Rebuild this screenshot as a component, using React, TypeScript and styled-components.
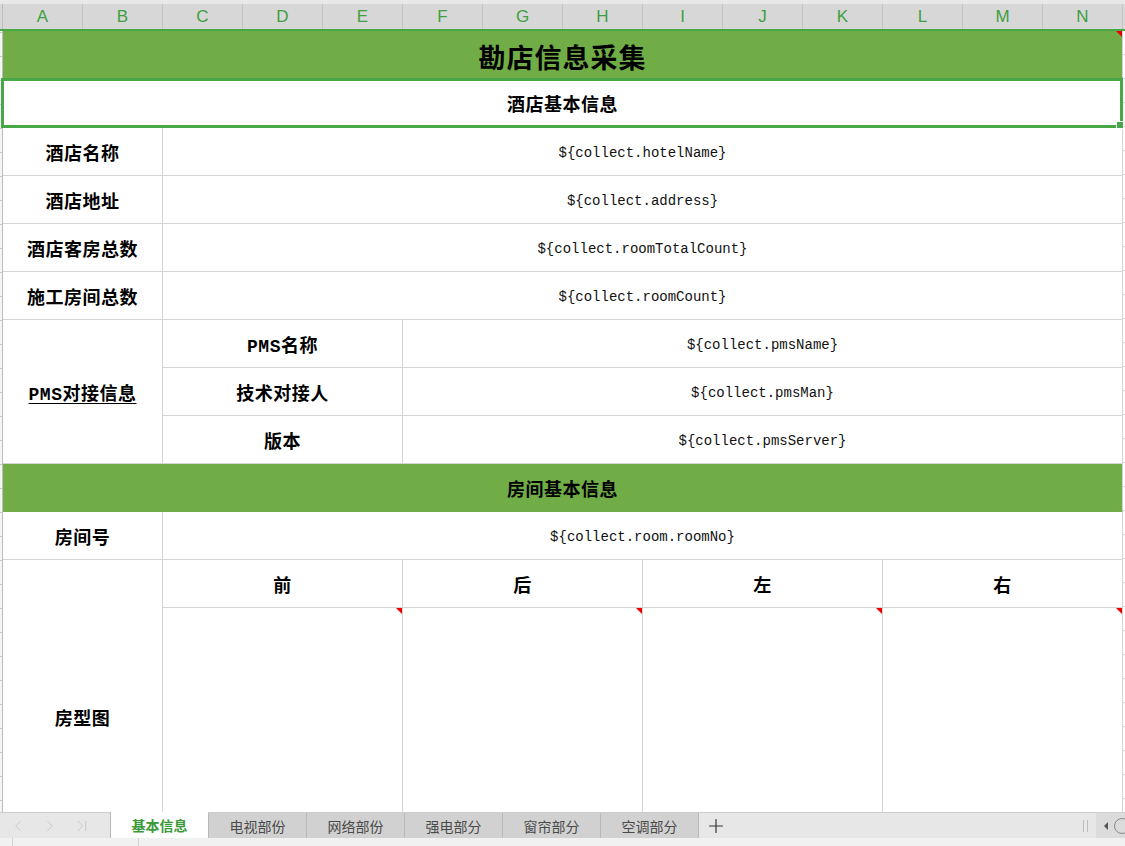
import React from 'react';
import styled, { createGlobalStyle } from 'styled-components';
import { ChevronLeft, ChevronRight, ChevronLast, Plus } from 'lucide-react';

const CELL_FONT = `"Liberation Mono", "Noto Sans CJK SC", monospace`;
const UI_FONT = `"Noto Sans CJK SC", "Noto Sans", sans-serif`;
const FILL = '#70ad47';
const GRID = '#d4d4d4';
const SEL = '#48a848';

const GlobalStyle = createGlobalStyle`
  html, body { margin: 0; padding: 0; overflow: hidden; background: #fff; }
  #root { width: 1125px; height: 846px; }
`;

const Window = styled.div`
  width: 1125px;
  height: 846px;
  display: flex;
  flex-direction: column;
  overflow: hidden;
  background: #fff;
`;

const TopStrip = styled.div`
  flex: none;
  height: 4px;
  background: #e8e8e8;
`;

const ColumnHeaderBar = styled.div`
  flex: none;
  display: flex;
  height: 25px;
  background: #d7d7d7;
  border-bottom: 2px solid ${SEL};
`;

const Corner = styled.div`
  flex: none;
  width: 2px;
  border-right: 1px solid #bdbdbd;
`;

const ColumnHeader = styled.div`
  flex: none;
  width: 80px;
  box-sizing: border-box;
  border-right: 1px solid #c4c4c4;
  display: flex;
  align-items: center;
  justify-content: center;
  padding-top: 1px;
  font-family: "Liberation Sans", Arial, sans-serif;
  font-size: 17px;
  color: #3f9f3f;
`;

const SheetViewport = styled.div`
  position: relative;
  flex: none;
  height: 781px;
  display: flex;
  overflow: hidden;
`;

const RowHeaderStrip = styled.div`
  flex: none;
  width: 2px;
  border-right: 1px solid #bdbdbd;
  background-color: #f4f4f4;
  background-image: repeating-linear-gradient(to bottom, #c6c6c6 0 1px, transparent 1px 24px);
  background-position: 0 1px;
`;

const Grid = styled.div`
  flex: none;
  display: grid;
  grid-template-columns: repeat(15, 80px);
  grid-template-rows: 47px 50px repeat(10, 48px) 266px;
`;

const Cell = styled.div<{ $col: string; $row: string; $fill?: string }>`
  grid-column: ${(p) => p.$col};
  grid-row: ${(p) => p.$row};
  position: relative;
  box-sizing: border-box;
  min-width: 0;
  display: flex;
  align-items: center;
  justify-content: center;
  background: ${(p) => p.$fill ?? '#fff'};
  border-right: 1px solid ${GRID};
  border-bottom: 1px solid ${(p) => p.$fill ?? GRID};
  color: #000;
`;

const NextColumn = styled.div`
  grid-column: 15;
  grid-row: 1 / -1;
  background-image: repeating-linear-gradient(to bottom, transparent 0 23px, ${GRID} 23px 24px);
`;

const Title = styled.span`
  font-family: ${CELL_FONT};
  font-size: 27px;
  font-weight: 700;
  letter-spacing: 1px;
  padding-top: 4px;
`;

const Label = styled.span<{ $underline?: boolean }>`
  font-family: ${CELL_FONT};
  font-size: 18px;
  font-weight: 700;
  letter-spacing: 0.5px;
  white-space: nowrap;
  text-decoration: ${(p) => (p.$underline ? 'underline' : 'none')};
  text-underline-offset: 3px;
  text-decoration-thickness: 1px;
`;

const Value = styled.span`
  font-family: "Liberation Mono", "DejaVu Sans Mono", monospace;
  font-size: 14px;
  color: #111;
  white-space: nowrap;
  padding-top: 2px;
`;

const CommentMark = styled.span`
  position: absolute;
  top: 0;
  right: 0;
  width: 0;
  height: 0;
  border-top: 6px solid #e80000;
  border-left: 6px solid transparent;
`;

const Selection = styled.div`
  position: absolute;
  left: 1px;
  top: 47px;
  width: 1122px;
  height: 50px;
  box-sizing: border-box;
  border: 3px solid ${SEL};
  pointer-events: none;
`;

const FillHandle = styled.span`
  position: absolute;
  right: -4px;
  bottom: -4px;
  width: 6px;
  height: 6px;
  background: ${SEL};
  border: 1px solid #fff;
`;

const TabBar = styled.div`
  flex: none;
  height: 25px;
  display: flex;
  align-items: stretch;
  background: #e7e7e7;
  border-top: 1px solid #cdcdcd;
`;

const NavArea = styled.div`
  flex: none;
  width: 110px;
  display: flex;
  align-items: center;
  padding-left: 9px;
  gap: 14px;
  box-sizing: border-box;
  color: #c6c6c6;
`;

const Tab = styled.div<{ $active?: boolean }>`
  flex: none;
  width: 98px;
  box-sizing: border-box;
  display: flex;
  align-items: center;
  justify-content: center;
  font-family: ${UI_FONT};
  font-size: 14px;
  font-weight: ${(p) => (p.$active ? 700 : 400)};
  color: ${(p) => (p.$active ? '#3a9a3a' : '#4a4a4a')};
  background: ${(p) => (p.$active ? '#fff' : '#d1d1d1')};
  border-left: 1px solid #b9b9b9;
  margin-top: ${(p) => (p.$active ? '-1px' : '0')};
`;

const AddTab = styled.div`
  flex: none;
  display: flex;
  align-items: center;
  padding-left: 6px;
  border-left: 1px solid #b9b9b9;
  color: #333;
`;

const RightTools = styled.div`
  margin-left: auto;
  display: flex;
  align-items: center;
  gap: 8px;
`;

const Grip = styled.span`
  width: 3px;
  height: 12px;
  border-left: 1px solid #bdbdbd;
  border-right: 1px solid #bdbdbd;
`;

const ScrollBox = styled.div`
  width: 29px;
  height: 25px;
  display: flex;
  align-items: center;
  gap: 6px;
  padding-left: 8px;
  box-sizing: border-box;
  background: #dcdcdc;
  overflow: hidden;
`;

const SmallArrow = styled.span`
  width: 0;
  height: 0;
  border-top: 4px solid transparent;
  border-bottom: 4px solid transparent;
  border-right: 4px solid #555;
`;

const Ring = styled.span`
  flex: none;
  width: 14px;
  height: 14px;
  border-radius: 50%;
  border: 1px solid #888;
`;

const StatusBar = styled.div`
  flex: none;
  height: 8px;
  display: flex;
  background: #f1f1f1;
`;

const StatusSeg = styled.div<{ $w: number }>`
  flex: none;
  width: ${(p) => p.$w}px;
  border-right: 1px solid #d2d2d2;
`;

const columns = ['A', 'B', 'C', 'D', 'E', 'F', 'G', 'H', 'I', 'J', 'K', 'L', 'M', 'N', ''];

const basicRows = [
  { label: '酒店名称', value: '${collect.hotelName}' },
  { label: '酒店地址', value: '${collect.address}' },
  { label: '酒店客房总数', value: '${collect.roomTotalCount}' },
  { label: '施工房间总数', value: '${collect.roomCount}' },
];

const pmsRows = [
  { label: 'PMS名称', value: '${collect.pmsName}' },
  { label: '技术对接人', value: '${collect.pmsMan}' },
  { label: '版本', value: '${collect.pmsServer}' },
];

const sides = ['前', '后', '左', '右'];
const tabs = ['基本信息', '电视部份', '网络部份', '强电部分', '窗帘部分', '空调部分'];

export default function App() {
  return (
    <Window>
      <GlobalStyle />
      <TopStrip />
      <ColumnHeaderBar>
        <Corner />
        {columns.map((c, i) => (
          <ColumnHeader key={i}>{c}</ColumnHeader>
        ))}
      </ColumnHeaderBar>

      <SheetViewport>
        <RowHeaderStrip />
        <Grid>
          <Cell $col="1 / 15" $row="1" $fill={FILL}>
            <Title>勘店信息采集</Title>
            <CommentMark />
          </Cell>
          <Cell $col="1 / 15" $row="2">
            <Label>酒店基本信息</Label>
          </Cell>

          {basicRows.map((r, i) => (
            <React.Fragment key={r.label}>
              <Cell $col="1 / 3" $row={String(3 + i)}>
                <Label>{r.label}</Label>
              </Cell>
              <Cell $col="3 / 15" $row={String(3 + i)}>
                <Value>{r.value}</Value>
              </Cell>
            </React.Fragment>
          ))}

          <Cell $col="1 / 3" $row="7 / 10">
            <Label $underline>PMS对接信息</Label>
          </Cell>
          {pmsRows.map((r, i) => (
            <React.Fragment key={r.label}>
              <Cell $col="3 / 6" $row={String(7 + i)}>
                <Label>{r.label}</Label>
              </Cell>
              <Cell $col="6 / 15" $row={String(7 + i)}>
                <Value>{r.value}</Value>
              </Cell>
            </React.Fragment>
          ))}

          <Cell $col="1 / 15" $row="10" $fill={FILL}>
            <Label>房间基本信息</Label>
          </Cell>

          <Cell $col="1 / 3" $row="11">
            <Label>房间号</Label>
          </Cell>
          <Cell $col="3 / 15" $row="11">
            <Value>{'${collect.room.roomNo}'}</Value>
          </Cell>

          <Cell $col="1 / 3" $row="12 / 14">
            <Label>房型图</Label>
          </Cell>
          {sides.map((s, i) => (
            <Cell key={s} $col={`${3 + i * 3} / ${6 + i * 3}`} $row="12">
              <Label>{s}</Label>
            </Cell>
          ))}
          {sides.map((s, i) => (
            <Cell key={`img-${s}`} $col={`${3 + i * 3} / ${6 + i * 3}`} $row="13">
              <CommentMark />
            </Cell>
          ))}

          <NextColumn />
        </Grid>
        <Selection>
          <FillHandle />
        </Selection>
      </SheetViewport>

      <TabBar>
        <NavArea>
          <ChevronLeft size={18} strokeWidth={1.2} />
          <ChevronRight size={18} strokeWidth={1.2} />
          <ChevronLast size={18} strokeWidth={1.2} />
        </NavArea>
        {tabs.map((t, i) => (
          <Tab key={t} $active={i === 0}>
            {t}
          </Tab>
        ))}
        <AddTab>
          <Plus size={22} strokeWidth={1.3} />
        </AddTab>
        <RightTools>
          <Grip />
          <ScrollBox>
            <SmallArrow />
            <Ring />
          </ScrollBox>
        </RightTools>
      </TabBar>
      <StatusBar>
        <StatusSeg $w={12} />
        <StatusSeg $w={125} />
      </StatusBar>
    </Window>
  );
}
